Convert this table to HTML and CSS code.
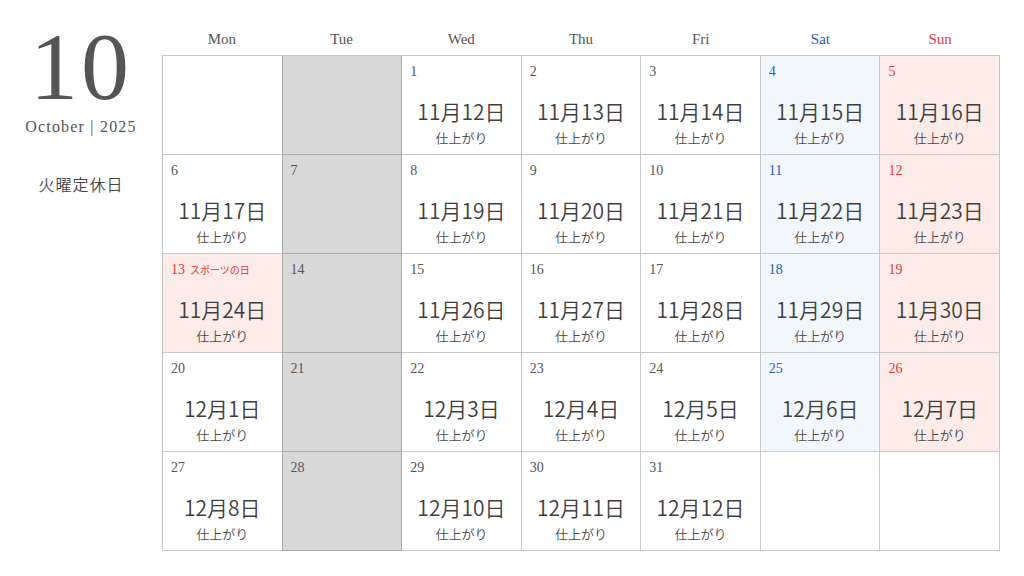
FILE: index.html
```html
<!DOCTYPE html>
<html lang="ja">
<head>
  <meta charset="UTF-8" />
  <meta name="viewport" content="width=device-width, initial-scale=1.0"/>
  <title>October 2025</title>
  <link rel="stylesheet" href="styles.css">
</head>
<body>
  <div class="page">
    <div class="side">
      <div class="month">10</div>
      <div class="year">October | 2025</div>
      <div class="closed">火曜定休日</div>
    </div>

    <div class="calendar">
      <div class="days">
        <div>Mon</div>
        <div>Tue</div>
        <div>Wed</div>
        <div>Thu</div>
        <div>Fri</div>
        <div class="sat">Sat</div>
        <div class="sun">Sun</div>
      </div>
      <div class="grid">
        <!-- week 1 -->
        <div class="cell"></div>
        <div class="cell off"></div>
        <div class="cell"><span class="num">1</span><p class="date">11月12日</p><p class="done">仕上がり</p></div>
        <div class="cell"><span class="num">2</span><p class="date">11月13日</p><p class="done">仕上がり</p></div>
        <div class="cell"><span class="num">3</span><p class="date">11月14日</p><p class="done">仕上がり</p></div>
        <div class="cell sat"><span class="num">4</span><p class="date">11月15日</p><p class="done">仕上がり</p></div>
        <div class="cell sun"><span class="num">5</span><p class="date">11月16日</p><p class="done">仕上がり</p></div>
        <!-- week 2 -->
        <div class="cell"><span class="num">6</span><p class="date">11月17日</p><p class="done">仕上がり</p></div>
        <div class="cell off"><span class="num">7</span></div>
        <div class="cell"><span class="num">8</span><p class="date">11月19日</p><p class="done">仕上がり</p></div>
        <div class="cell"><span class="num">9</span><p class="date">11月20日</p><p class="done">仕上がり</p></div>
        <div class="cell"><span class="num">10</span><p class="date">11月21日</p><p class="done">仕上がり</p></div>
        <div class="cell sat"><span class="num">11</span><p class="date">11月22日</p><p class="done">仕上がり</p></div>
        <div class="cell sun"><span class="num">12</span><p class="date">11月23日</p><p class="done">仕上がり</p></div>
        <!-- week 3 -->
        <div class="cell sun"><span class="num">13<small>スポーツの日</small></span><p class="date">11月24日</p><p class="done">仕上がり</p></div>
        <div class="cell off"><span class="num">14</span></div>
        <div class="cell"><span class="num">15</span><p class="date">11月26日</p><p class="done">仕上がり</p></div>
        <div class="cell"><span class="num">16</span><p class="date">11月27日</p><p class="done">仕上がり</p></div>
        <div class="cell"><span class="num">17</span><p class="date">11月28日</p><p class="done">仕上がり</p></div>
        <div class="cell sat"><span class="num">18</span><p class="date">11月29日</p><p class="done">仕上がり</p></div>
        <div class="cell sun"><span class="num">19</span><p class="date">11月30日</p><p class="done">仕上がり</p></div>
        <!-- week 4 -->
        <div class="cell"><span class="num">20</span><p class="date">12月1日</p><p class="done">仕上がり</p></div>
        <div class="cell off"><span class="num">21</span></div>
        <div class="cell"><span class="num">22</span><p class="date">12月3日</p><p class="done">仕上がり</p></div>
        <div class="cell"><span class="num">23</span><p class="date">12月4日</p><p class="done">仕上がり</p></div>
        <div class="cell"><span class="num">24</span><p class="date">12月5日</p><p class="done">仕上がり</p></div>
        <div class="cell sat"><span class="num">25</span><p class="date">12月6日</p><p class="done">仕上がり</p></div>
        <div class="cell sun"><span class="num">26</span><p class="date">12月7日</p><p class="done">仕上がり</p></div>
        <!-- week 5 -->
        <div class="cell"><span class="num">27</span><p class="date">12月8日</p><p class="done">仕上がり</p></div>
        <div class="cell off"><span class="num">28</span></div>
        <div class="cell"><span class="num">29</span><p class="date">12月10日</p><p class="done">仕上がり</p></div>
        <div class="cell"><span class="num">30</span><p class="date">12月11日</p><p class="done">仕上がり</p></div>
        <div class="cell"><span class="num">31</span><p class="date">12月12日</p><p class="done">仕上がり</p></div>
        <div class="cell"></div>
        <div class="cell"></div>
      </div>
    </div>
  </div>
</body>
</html>
```

FILE: styles.css
```css
body {
  margin: 0;
  background-color: #ffffff;
  color: #555555;
  font-family: "Liberation Serif", "Noto Sans CJK JP", serif;
}

.page {
  display: flex;
  width: 1024px;
  height: 576px;
}

.side {
  width: 162px;
  display: flex;
  flex-direction: column;
  align-items: center;
  padding-top: 24px;
}

.month {
  font-size: 96px;
  line-height: 86px;
  letter-spacing: 3px;
  color: #555555;
}

.year {
  margin-top: 8px;
  font-size: 16px;
  letter-spacing: 1.2px;
  color: #555555;
}

.closed {
  margin-top: 36px;
  font-family: "Noto Sans CJK JP", sans-serif;
  font-weight: 350;
  font-size: 16px;
  letter-spacing: 1px;
  color: #444444;
}

.calendar {
  padding-top: 24px;
  width: 838px;
}

.days {
  display: grid;
  grid-template-columns: repeat(7, 1fr);
  height: 31px;
  align-items: center;
  text-align: center;
  font-size: 15px;
  color: #555555;
}

.days .sat {
  color: #2a5cb8;
}

.days .sun {
  color: #e0383e;
}

.grid {
  display: grid;
  grid-template-columns: repeat(7, 1fr);
  grid-auto-rows: 99px;
  border-top: 1px solid #c8c8c8;
  border-left: 1px solid #c8c8c8;
}

.cell {
  border-right: 1px solid #c8c8c8;
  border-bottom: 1px solid #c8c8c8;
  display: flex;
  flex-direction: column;
  align-items: center;
}

.cell.off {
  background-color: #d9d9d9;
  box-shadow: -1px 0 0 #aaaaaa;
  border-color: #aaaaaa;
}

.cell.sat {
  background-color: #f1f7fb;
}

.cell.sun {
  background-color: #fdebe8;
}

.num {
  align-self: flex-start;
  margin: 7px 0 0 8px;
  height: 18px;
  font-size: 14px;
  line-height: 18px;
  color: #555555;
}

.sat .num {
  color: #2a5cb8;
}

.sun .num {
  color: #e0383e;
}

.num small {
  margin-left: 5px;
  font-family: "Noto Sans CJK JP", sans-serif;
  font-size: 10px;
  color: #e0383e;
}

.date {
  margin: 17px 0 0;
  font-family: "Noto Sans CJK JP", sans-serif;
  font-weight: 350;
  font-size: 21px;
  line-height: 26px;
  color: #3f3f3f;
}

.done {
  margin: 6px 0 0;
  font-family: "Noto Sans CJK JP", sans-serif;
  font-weight: 350;
  font-size: 13px;
  line-height: 16px;
  color: #4a4a4a;
}
```
